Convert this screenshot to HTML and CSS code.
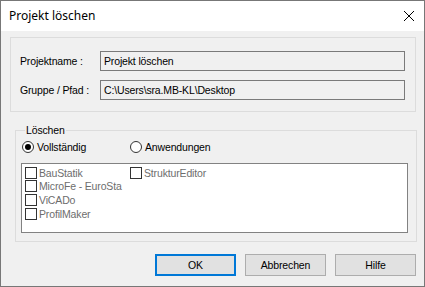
FILE: index.html
```html
<!DOCTYPE html>
<html lang="de">
<head>
    <meta charset="UTF-8">
    <title>Projekt löschen</title>
    <link rel="stylesheet" href="styles.css">
</head>
<body>
    <div class="dialog">
        <div class="titlebar">
            <span class="title">Projekt löschen</span>
            <svg class="close" width="12" height="12" viewBox="0 0 12 12">
                <path d="M1 1 L11 11 M11 1 L1 11" stroke="#000" stroke-width="1" fill="none"/>
            </svg>
        </div>
        <div class="content">
            <div class="group info">
                <div class="row">
                    <span class="label">Projektname :</span>
                    <div class="field">Projekt löschen</div>
                </div>
                <div class="row">
                    <span class="label">Gruppe / Pfad :</span>
                    <div class="field">C:\Users\sra.MB-KL\Desktop</div>
                </div>
            </div>

            <fieldset class="group delete">
                <legend>Löschen</legend>
                <div class="radios">
                    <span class="radio checked"><i></i>Vollständig</span>
                    <span class="radio"><i></i>Anwendungen</span>
                </div>
                <div class="listbox">
                    <ul class="col first">
                        <li><i></i>BauStatik</li>
                        <li><i></i>MicroFe - EuroSta</li>
                        <li><i></i>ViCADo</li>
                        <li><i></i>ProfilMaker</li>
                    </ul>
                    <ul class="col">
                        <li><i></i>StrukturEditor</li>
                    </ul>
                </div>
            </fieldset>

            <div class="buttons">
                <span class="btn default">OK</span>
                <span class="btn">Abbrechen</span>
                <span class="btn">Hilfe</span>
            </div>
        </div>
    </div>
</body>
</html>
```

FILE: styles.css
```css
* { padding: 0; margin: 0; box-sizing: border-box; }
li { list-style: none; }

body { background: #fff; font-family: "Liberation Sans", Arial, sans-serif; font-size: 10.5px; letter-spacing: -0.15px; color: #000; }

.dialog { width: 425px; height: 287px; border: 1px solid #777; display: flex; flex-direction: column; background: #f0f0f0; }

.titlebar { height: 30px; background: #fff; display: flex; align-items: center; justify-content: space-between; padding: 0 9px 0 8px; }
.titlebar .title { font-family: "Noto Sans", sans-serif; font-size: 12px; letter-spacing: 0; margin-top: -1px; }
.titlebar .close { margin-top: -1px; }

.content { flex: 1; display: flex; flex-direction: column; }

.group { border: 1px solid #dcdcdc; }

.info { margin: 6px 0 0 9px; width: 406px; height: 75px; padding: 13px 0 0 9px; display: flex; flex-direction: column; gap: 9px; }
.info .row { display: flex; align-items: center; }
.info .label { width: 80px; }
.info .field { width: 305px; height: 20px; border: 1px solid #7a7a7a; background: #f0f0f0; padding-left: 3px; line-height: 18px; white-space: nowrap; }

.delete { margin: 11px 0 0 14px; width: 402px; padding: 0 0 8px 6px; }
.delete legend { line-height: 14px; margin-left: 3px; padding: 0 1px; }

.radios { display: flex; margin-top: 3px; height: 14px; align-items: center; }
.radio { display: flex; align-items: center; gap: 3px; width: 108px; }
.radio i { width: 12px; height: 12px; border: 1px solid #333; border-radius: 50%; background: #fff; display: flex; align-items: center; justify-content: center; }
.radio.checked i::after { content: ""; width: 6px; height: 6px; border-radius: 50%; background: #000; }

.listbox { margin: 9px 0 0 -1px; width: 387px; height: 70px; border: 1px solid #828282; background: #fff; padding: 2px 3px; display: flex; color: #6d6d6d; }
.listbox .col { display: flex; flex-direction: column; }
.listbox .first { width: 105px; }
.listbox li { height: 13.67px; display: flex; align-items: center; gap: 2px; white-space: nowrap; }
.listbox li i { flex: none; width: 12px; height: 12px; border: 1px solid #333; background: #fff; }

.buttons { display: flex; justify-content: flex-end; gap: 9px; margin-top: 12px; padding-right: 8px; }
.btn { width: 81px; height: 22px; border: 1px solid #adadad; background: #e1e1e1; display: flex; align-items: center; justify-content: center; }
.btn.default { border: 2px solid #0078d7; }
```
